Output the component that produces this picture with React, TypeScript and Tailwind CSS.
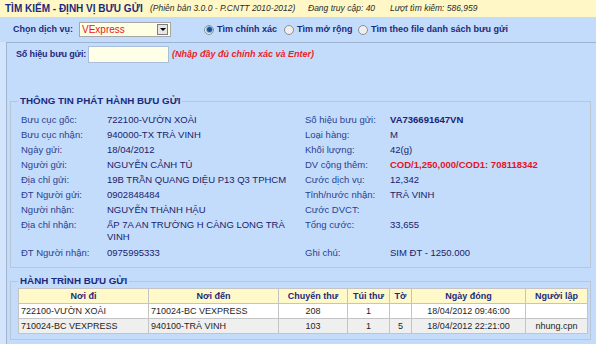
import React from "react";

const NAVY = "text-[#1c2a7c]";

function Radio({ checked }: { checked?: boolean }) {
  return (
    <span className="inline-flex items-center justify-center w-[10px] h-[10px] rounded-full border border-[#8f8f8f] bg-[#eeeeee] shrink-0">
      {checked && (
        <span className="w-[5px] h-[5px] rounded-full bg-[#1d4f8f] ring-1 ring-[#7fb0e0]" />
      )}
    </span>
  );
}

type Row = { l: string; v: React.ReactNode; rl: string; rv: React.ReactNode; tall?: boolean };

const rows: Row[] = [
  { l: "Bưu cục gốc:", v: "722100-VƯỜN XOÀI", rl: "Số hiệu bưu gửi:", rv: <span className="font-bold text-[#1a2370]">VA736691647VN</span> },
  { l: "Bưu cục nhận:", v: "940000-TX TRÀ VINH", rl: "Loại hàng:", rv: "M" },
  { l: "Ngày gửi:", v: "18/04/2012", rl: "Khối lượng:", rv: "42(g)" },
  { l: "Người gửi:", v: "NGUYỄN CẢNH TÚ", rl: "DV cộng thêm:", rv: <span className="font-bold text-[#e5131f]">COD/1,250,000/COD1: 708118342</span> },
  { l: "Địa chỉ gửi:", v: "19B TRẦN QUANG DIỆU P13 Q3 TPHCM", rl: "Cước dịch vụ:", rv: "12,342" },
  { l: "ĐT Người gửi:", v: "0902848484", rl: "Tỉnh/nước nhận:", rv: "TRÀ VINH" },
  { l: "Người nhận:", v: "NGUYỄN THÀNH HẬU", rl: "Cước DVCT:", rv: "" },
  { l: "Địa chỉ nhận:", v: <>ẤP 7A AN TRƯỜNG H CÀNG LONG TRÀ<br />VINH</>, rl: "Tổng cước:", rv: "33,655", tall: true },
  { l: "ĐT Người nhận:", v: "0975995333", rl: "Ghi chú:", rv: "SIM ĐT - 1250.000" },
];

const trips = [
  ["722100-VƯỜN XOÀI", "710024-BC VEXPRESS", "208", "1", "", "18/04/2012 09:46:00", ""],
  ["710024-BC VEXPRESS", "940100-TRÀ VINH", "103", "1", "5", "18/04/2012 22:21:00", "nhung.cpn"],
];

export default function App() {
  return (
    <div className="w-[596px] h-[344px] overflow-hidden bg-[#c4dcfc] font-['Liberation_Sans',Arial,sans-serif]">
      {/* header */}
      <div className="h-[17px] bg-[#fff8c6] flex items-center pl-[5px] whitespace-nowrap">
        <span className={`w-[145px] text-[10px] font-bold ${NAVY}`}>TÌM KIẾM - ĐỊNH VỊ BƯU GỬI</span>
        <span className="w-[158px] text-[8.5px] italic text-[#2b2b2b]">(Phiên bản 3.0.0 - P.CNTT 2010-2012)</span>
        <span className="w-[82px] text-[8.5px] italic text-[#2b2b2b]">Đang truy cập: 40</span>
        <span className="text-[8.5px] italic text-[#2b2b2b]">Lượt tìm kiếm: 586,959</span>
      </div>

      {/* service row */}
      <div className="h-[25px] flex items-center pl-[13px] whitespace-nowrap">
        <span className={`w-[66px] text-[9px] font-bold ${NAVY}`}>Chọn dịch vụ:</span>
        <div className="w-[92px] h-[15px] bg-[#ffffe4] border border-[#a7a7a7] flex items-center justify-between pl-[2px] pr-[2px]">
          <span className="text-[10px] text-[#e8141f] leading-none">VExpress</span>
          <span className="w-[11px] h-[11px] bg-[#e6e6e6] border border-[#7d7d7d] flex items-center justify-center">
            <span className="w-0 h-0 border-l-[3px] border-r-[3px] border-t-[3px] border-l-transparent border-r-transparent border-t-black" />
          </span>
        </div>
        <div className="ml-[33px] flex items-center">
          <span className="w-[80px] flex items-center gap-[3px]">
            <Radio checked />
            <span className={`text-[9px] font-bold ${NAVY}`}>Tìm chính xác</span>
          </span>
          <span className="w-[74px] flex items-center gap-[3px]">
            <Radio />
            <span className={`text-[9px] font-bold ${NAVY}`}>Tìm mở rộng</span>
          </span>
          <span className="flex items-center gap-[3px]">
            <Radio />
            <span className={`text-[9px] font-bold ${NAVY}`}>Tìm theo file danh sách bưu gửi</span>
          </span>
        </div>
      </div>

      {/* panel */}
      <div className="bg-[#d3e5fc] pl-[6px] h-[302px]">
        <div className="h-full bg-[#c4dcfc] border-t border-l border-[#9fb3cf]">
          <div className="mt-[3px] h-[17px] flex items-center pl-[9px] whitespace-nowrap">
            <span className={`w-[72px] shrink-0 text-[9px] tracking-[-0.15px] font-bold ${NAVY}`}>Số hiệu bưu gửi:</span>
            <span className="w-[81px] h-[17px] shrink-0 bg-[#ffffe8] border border-[#a9bedb]" />
            <span className="ml-[3px] text-[9px] font-bold italic text-[#ea1f28]">(Nhập đầy đủ chính xác và Enter)</span>
          </div>

          <fieldset className="ml-[3px] mt-[32px] w-[581px] border border-[#bcc6d3] pl-[10px] pb-[7px] pt-[5px]">
            <legend className={`ml-[-3px] px-[2px] text-[9.8px] leading-[12px] font-bold ${NAVY}`}>THÔNG TIN PHÁT HÀNH BƯU GỬI</legend>
            <div className="grid grid-cols-[86px_198px_85px_1fr] text-[9.5px]">
              {rows.map((r, i) => {
                const cls = r.tall ? "leading-[12px] py-[2px]" : "leading-[15px]";
                return (
                  <React.Fragment key={i}>
                    <div className={`${cls} text-[#2a418f]`}>{r.l}</div>
                    <div className={`${cls} text-[#18226a] whitespace-nowrap`}>{r.v}</div>
                    <div className={`${cls} text-[#2a418f]`}>{r.rl}</div>
                    <div className={`${cls} text-[#18226a] whitespace-nowrap`}>{r.rv}</div>
                  </React.Fragment>
                );
              })}
            </div>
          </fieldset>

          <fieldset className="ml-[3px] mt-[7px] w-[581px] border border-[#bcc6d3] pl-[7px] pb-[5px] pt-[1px]">
            <legend className={`ml-[0px] px-[2px] text-[9.8px] leading-[12px] font-bold ${NAVY}`}>HÀNH TRÌNH BƯU GỬI</legend>
            <table className="w-[569px] border-collapse border border-[#c4c4c4] text-[9px] table-fixed">
              <colgroup>
                <col className="w-[130px]" />
                <col className="w-[130px]" />
                <col className="w-[69px]" />
                <col className="w-[42px]" />
                <col className="w-[22px]" />
                <col className="w-[114px]" />
                <col className="w-[62px]" />
              </colgroup>
              <thead>
                <tr className="bg-[#fff9c9] h-[15px]">
                  {["Nơi đi", "Nơi đến", "Chuyển thư", "Túi thư", "Tờ", "Ngày đóng", "Người lập"].map((h) => (
                    <th key={h} className={`border border-[#c4c4c4] font-bold text-center leading-[13px] p-0 ${NAVY}`}>{h}</th>
                  ))}
                </tr>
              </thead>
              <tbody>
                {trips.map((t, i) => (
                  <tr key={i} className={`${i === 0 ? "bg-white" : "bg-[#efefef]"} h-[15px]`}>
                    {t.map((c, j) => (
                      <td key={j} className={`border border-[#c4c4c4] leading-[13px] p-0 text-[#1e1e1e] ${j < 2 ? "text-left pl-[2px]" : "text-center"}`}>{c}</td>
                    ))}
                  </tr>
                ))}
              </tbody>
            </table>
          </fieldset>
        </div>
      </div>
    </div>
  );
}
